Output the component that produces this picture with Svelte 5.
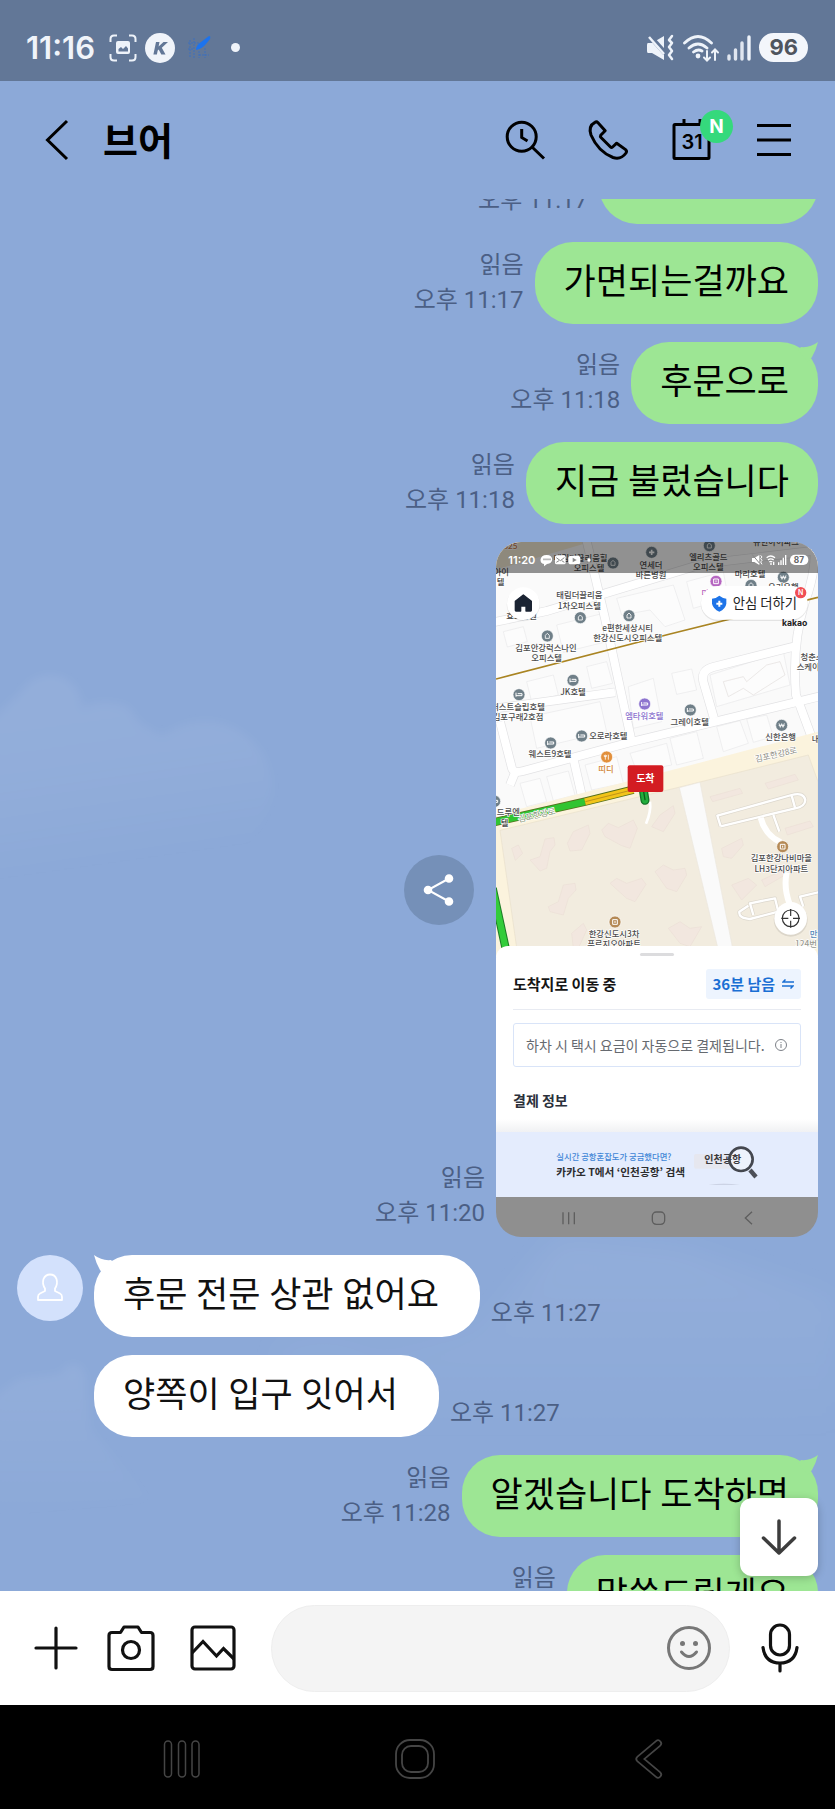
<script>
  const before = [
    { text: '가면되는걸까요', time: '오후 11:17', tail: false },
    { text: '후문으로', time: '오후 11:18', tail: true },
    { text: '지금 불렀습니다', time: '오후 11:18', tail: false }
  ];
  const received = [
    { text: '후문 전문 상관 없어요', time: '오후 11:27', first: true },
    { text: '양쪽이 입구 잇어서', time: '오후 11:27', first: false }
  ];
  const after = [
    { text: '알겠습니다 도착하면', time: '오후 11:28', tail: true },
    { text: '말씀드릴게요', time: '오후 11:28', tail: false }
  ];

  const gray = '#6f7f88';
  const ink = '#4b4b4b';
  const pins = [
    [369, 84, gray, 'b'], [485, 52, gray, 'p'], [658, 32, gray, 'b'], [880, 127, gray, 'w'],
    [783, 151, gray, 'b'], [678, 139, '#b565c0', 's'], [271, 248, gray, 'b'], [417, 242, gray, 'b'],
    [172, 303, gray, 'b'], [249, 436, gray, 'h'], [87, 479, gray, 'h'], [464, 507, '#8d74cf', 'h'],
    [601, 525, gray, 'h'], [275, 603, gray, 'h'], [875, 571, gray, 'w'], [182, 624, gray, 'h'],
    [350, 666, '#e2903c', 'f'], [14, 799, gray, 'h'], [878, 935, '#b58a56', 's'], [375, 1161, '#b58a56', 's']
  ];
  const labels = [
    [62, 42, 's25', '#c77b4a'], [34, 119, '아이', ink], [32, 150, '텔', ink],
    [272, 79, '태림더끌리움힐', ink], [297, 107, '오피스텔', ink],
    [483, 98, '연세더', ink], [483, 129, '바른병원', ink],
    [655, 75, '엘리츠골드', ink], [655, 106, '오피스텔', ink], [858, 29, '유한아이파크', ink],
    [780, 126, '마리호텔', ink], [880, 164, '우리은행', ink], [646, 182, '마', '#b565c0'],
    [268, 190, '태림더끌리움', ink], [268, 221, '1차오피스텔', ink], [95, 252, '효요양원', ink],
    [413, 287, 'e편한세상시티', ink], [413, 318, '한강신도시오피스텔', ink],
    [168, 348, '김포안강럭스나인', ink], [170, 379, '오피스텔', ink],
    [249, 481, 'JK호텔', ink], [84, 524, '퍼스트슬립호텔', ink], [84, 555, '김포구래2호점', ink],
    [463, 552, '엠타워호텔', '#8d74cf'], [599, 570, '그레이호텔', ink], [355, 612, '오로라호텔', ink],
    [872, 616, '신한은행', ink], [180, 667, '웨스트9호텔', ink], [348, 711, '띠디', '#d08436'],
    [966, 374, '청춘스', ink], [966, 405, '스케이트', ink], [988, 621, '내과', ink],
    [55, 841, '드루엔', ink], [44, 872, '텔', ink],
    [874, 979, '김포한강나비마을', ink], [874, 1010, 'LH3단지아파트', ink],
    [372, 1205, '한강신도시3차', ink], [372, 1237, '푸르지오아파트', ink],
    [982, 1207, '만남', '#4f86b8'], [948, 1235, '124번', '#9a9a90']
  ];
  const roads = [
    'M10 262 L170 228 L640 86 L1000 44',
    'M288 10 L345 250 L425 620',
    'M18 520 L375 472',
    'M30 560 L66 700 Q72 716 100 708 L420 622 L990 484',
    'M970 10 Q985 90 945 200 Q905 330 918 480 L985 660',
    'M915 334 L670 396 Q632 406 640 440 L672 550',
    'M250 670 L275 780', 'M78 706 L60 750'
  ];
  const blocks = [
    'M40 290 L100 275 L112 320 L52 336Z', 'M200 270 L340 235 L350 320 L220 352Z',
    'M380 190 L550 150 L585 255 L525 275 L480 225 L395 240Z', 'M110 440 L190 420 L205 480 L125 500Z',
    'M290 395 L350 380 L368 445 L305 460Z', 'M415 455 L490 430 L515 560 L430 580Z',
    'M545 415 L605 402 L620 465 L560 478Z', 'M660 420 L880 350 L900 450 L680 515Z',
    'M120 545 L330 500 L350 590 L140 640Z', 'M540 610 L620 590 L640 670 L560 690Z',
    'M680 575 L750 557 L775 625 L700 650Z', 'M770 552 L830 540 L850 605 L790 622Z',
    'M90 745 L150 730 L170 800 L110 815Z', 'M170 725 L235 708 L255 780 L190 797Z',
    'M285 690 L380 665 L400 745 L305 765Z', 'M590 140 L700 110 L715 190 L610 220Z',
    'M420 655 L530 625 L545 690 L440 710Z'
  ];
  const flats = [
    'M65 940 L85 930 L98 955 L76 976Z',
    'M120 975 L150 965 L165 912 L192 908 L195 930 L180 950 L170 1000 L150 1008Z',
    'M232 925 L250 890 L295 870 L300 895 L275 945 L240 948Z',
    'M335 885 L355 865 L385 878 L430 855 L442 880 L420 940 L395 932 L345 905Z',
    'M485 875 L510 840 L550 812 L555 835 L520 890Z',
    'M175 1115 L205 1100 L220 1050 L255 1045 L258 1065 L235 1090 L220 1140 L180 1130Z',
    'M360 1045 L380 1030 L410 1045 L455 1030 L468 1048 L435 1100 L410 1090Z',
    'M495 1010 L520 990 L550 1005 L585 1000 L590 1020 L560 1070 L530 1060Z',
    'M660 785 L750 760 L758 775 L668 800Z', 'M825 745 L915 718 L925 735 L835 762Z',
    'M885 880 L960 858 L970 875 L892 900Z', 'M695 940 L755 910 L760 930 L725 970 L700 965Z',
    'M725 1050 L775 1030 L800 1050 L755 1095Z', 'M815 1035 L880 1005 L885 1020 L825 1055Z',
    'M535 1180 L570 1160 L600 1180 L635 1175 L600 1235 L570 1225Z', 'M245 1195 L280 1165 L290 1185 L265 1240 L250 1240Z'
  ];
  let draft = $state('');
</script>

{#snippet sent(m)}
  <li class="row out">
    <p class="meta">읽음<br />{m.time}</p>
    <p class="bubble green">
      {m.text}
      {#if m.tail}
        <svg class="tail right" viewBox="0 0 20 20" aria-hidden="true">
          <path d="M3 5 Q12 6 20 0 Q18 8 14 15 L10 20 L0 8Z" fill="#9de694" />
        </svg>
      {/if}
    </p>
  </li>
{/snippet}

<div class="phone">
  <div class="status">
    <div class="side">
      <span class="clock">11:16</span>
      <svg class="cap" width="28" height="28" viewBox="0 0 28 28" fill="none" stroke="#eef3fa" stroke-width="2">
        <path d="M1.500 8V5Q1.500 1.500 5 1.500H8M20 1.500H23Q26.500 1.500 26.500 5V8M26.500 20V23Q26.500 26.500 23 26.500H20M8 26.500H5Q1.500 26.500 1.500 23V20" />
        <rect x="7" y="7" width="14" height="13" rx="2" fill="#eef3fa" stroke="none" />
        <path d="M9.500 17.500V15L12 13L14 15L17 12L19 14.500V17.500Z" fill="#627797" stroke="none" />
      </svg>
      <svg width="30" height="30" viewBox="0 0 30 30">
        <circle cx="15" cy="15" r="15" fill="#f0f4fa" />
        <path d="M11 9H14.500L13.600 13.500L18.500 9H23L16.800 14.800L20.500 21.500H16.300L13.700 16.500L12.700 17.400L11.900 21.500H8.400Z" fill="#627797" />
      </svg>
      <svg class="note" width="24" height="24" viewBox="0 0 24 24">
        <path d="M1 7H12M7 2V23M1 13H6M12 19H22M18 12V22M3 4V22M12 15V22" stroke="#3c70bd" stroke-width="1" stroke-dasharray="2 1" fill="none" />
        <path d="M9 14Q9 9 14 6L22 0Q24 0 23 3L19 8Q15 13 9 14Z" fill="#1c73ee" />
      </svg>
      <span class="dot"></span>
    </div>
    <div class="side">
      <svg width="28" height="28" viewBox="0 0 28 28">
        <path d="M1 9H5L17 2V26L5 19H1Q0 19 0 17V11Q0 9 1 9Z" fill="#eef3fa" />
        <path d="M1 0L18 19" stroke="#627797" stroke-width="5" />
        <path d="M2 3L17 20" stroke="#eef3fa" stroke-width="2.500" />
        <path d="M25 2L22 6L25 9L22 13L25 17L22 21L25 25" stroke="#eef3fa" stroke-width="2.500" fill="none" stroke-linecap="round" stroke-linejoin="round" />
      </svg>
      <svg width="36" height="28" viewBox="0 0 36 28" fill="none" stroke="#eef3fa" stroke-width="2.800" stroke-linecap="round">
        <path d="M1.500 9Q15 -4 28.500 9M6 14Q15 6 24 14M10.500 18Q15 14.500 19 17" />
        <circle cx="15" cy="22" r="2.400" fill="#eef3fa" stroke="none" />
        <path d="M24 17V26M21 23.500L24 26.500L27 23.500M32 26V16M29 18.500L32 15.500L35 18.500" stroke-width="2" />
      </svg>
      <svg width="24" height="28" viewBox="0 0 24 28" stroke="#eef3fa" stroke-width="3.400" stroke-linecap="round">
        <path d="M2 22V25M8.500 16V25M15 9V25" opacity=".9" /><path d="M22 3V25" />
      </svg>
      <span class="battery">96</span>
    </div>
  </div>

  <header>
    <button class="back" aria-label="뒤로">
      <svg width="24" height="48" viewBox="0 0 24 48"><path d="M22 5L2.500 24L22 43" fill="none" stroke="#000" stroke-width="3" /></svg>
    </button>
    <h1>브어</h1>
    <nav>
      <button aria-label="검색">
        <svg viewBox="0 0 48 48" fill="none" stroke="#000" stroke-width="3">
          <circle cx="20.700" cy="20.700" r="14.500" /><path d="M31 31L43 42.500M20.700 13V21.500L26.500 25" />
        </svg>
      </button>
      <button aria-label="통화">
        <svg viewBox="0 0 48 48" fill="none" stroke="#000" stroke-width="3" stroke-linejoin="round">
          <path d="M11 6.300Q12.600 5.300 14 6.800L21.200 14.800L16.700 19.200Q16 20.500 17 21.500L26.500 31Q27.500 32 28.600 31L32.700 27.200L41.600 33.600Q43.200 35 42 37Q37 44 29 41.500Q14 35.500 7 19Q4 10 11 6.300Z" />
        </svg>
      </button>
      <button aria-label="일정">
        <svg viewBox="0 0 48 48" fill="none" stroke="#000" stroke-width="3">
          <rect x="7" y="8.500" width="35" height="34" rx="1" /><path d="M17 3V10M33 3V10" />
        </svg>
        <span class="day">31</span>
        <span class="badge">N</span>
      </button>
      <button aria-label="메뉴">
        <svg viewBox="0 0 48 48" stroke="#000" stroke-width="3"><path d="M7 9.500H41M7 24H41M7 38.500H41" /></svg>
      </button>
    </nav>
  </header>

  <main>
    <svg class="sky" viewBox="0 0 835 1392" preserveAspectRatio="none" aria-hidden="true">
      <defs>
        <linearGradient id="fade" gradientUnits="userSpaceOnUse" x1="0" y1="470" x2="30" y2="680">
          <stop offset="0" stop-color="#fff" stop-opacity=".07" /><stop offset=".5" stop-color="#fff" stop-opacity=".05" /><stop offset="1" stop-color="#fff" stop-opacity="0" />
        </linearGradient>
        <linearGradient id="low" x1="0" y1="0" x2="0" y2="1">
          <stop offset="0" stop-color="#fff" stop-opacity=".06" /><stop offset="1" stop-color="#fff" stop-opacity="0" />
        </linearGradient>
        <filter id="soft"><feGaussianBlur stdDeviation="5" /></filter>
        <filter id="haze"><feGaussianBlur stdDeviation="14" /></filter>
      </defs>
      <path d="M-10 522 L20 495 Q35 472 60 478 Q80 485 82 510 Q100 498 128 508 L140 525 L162 537 Q200 512 235 530 Q268 548 272 585 Q275 620 220 680 H-10Z" fill="url(#fade)" filter="url(#soft)" />
      <path d="M-10 1200 L20 1180 L60 1175 Q75 1155 85 1175 L90 1230 L150 1300 L-10 1320Z" fill="url(#low)" filter="url(#soft)" />
      <path d="M270 1150 Q320 1125 380 1150 L480 1130 L560 1040 L680 1050 L835 1100 V1240 H300Z" fill="url(#low)" filter="url(#haze)" />
    </svg>

    <ol>
      <li class="row out">
        <p class="meta">오후 11:17</p>
        <p class="bubble green cut"></p>
      </li>
      {#each before as m}
        {@render sent(m)}
      {/each}

      <li class="row out">
        <p class="meta">읽음<br />오후 11:20</p>
        <div class="photo">
          <button class="share" aria-label="공유">
            <svg width="36" height="36" viewBox="0 0 36 36" fill="#fff" stroke="#fff" stroke-width="2">
              <path d="M28 6.500L7 18L28 29.500" fill="none" /><circle cx="7" cy="18" r="3.300" /><circle cx="28" cy="6.500" r="3.300" /><circle cx="28" cy="29.500" r="3.300" />
            </svg>
          </button>
          <div class="shot">
            <svg class="map" viewBox="18 21 966 1245" font-family="'Noto Sans CJK KR', sans-serif">
              <rect x="18" y="21" width="966" height="1245" fill="#fafafa" />
              <path d="M18 21H300L18 104Z" fill="#f4ecd6" />
              <g fill="#fcfcfc" stroke="#e9e9ea" stroke-width="2">
                {#each blocks as d}<path {d} />{/each}
              </g>
              <path d="M700 440 L760 425 L770 440 L830 390 L870 380 L885 420 L790 480 L760 460 L715 485Z" fill="none" stroke="#e3dedd" stroke-width="2" />
              <g fill="none" stroke="#e2e2e4" stroke-width="28">{#each roads as d}<path {d} />{/each}</g>
              <g fill="none" stroke="#fff" stroke-width="24">{#each roads as d}<path {d} />{/each}</g>
              <path d="M18 432L540 297L984 187" stroke="#a98422" stroke-width="5" fill="none" />
              <path d="M18 840L520 712L984 590V1266H18Z" fill="#fbf3dd" />
              <path d="M30 886L570 756L955 660L984 740V1215L800 1266H84Z" fill="#f2ecdf" stroke="#e8dfcb" stroke-width="2" />
              <path d="M568 758L630 742L733 1266H690Z" fill="#fafafa" stroke="#ebe7de" stroke-width="2" />
              <g fill="#f2e7df" stroke="#ecdfd6" stroke-width="2">
                {#each flats as d}<path {d} />{/each}
              </g>
              <g fill="none" stroke-linejoin="round">
                <g stroke="#dcd7cd" stroke-width="11">
                  <path d="M692 874L682 842L905 780Q940 770 946 795Q945 815 915 820L692 874M905 782L915 818M850 840L868 890" />
                  <path d="M790 1140L780 1105L855 1090L865 1130L780 1152Q745 1150 748 1130L775 1112M985 1072L930 1085L940 1115" />
                </g>
                <g stroke="#fff" stroke-width="7">
                  <path d="M692 874L682 842L905 780Q940 770 946 795Q945 815 915 820L692 874M905 782L915 818M850 840L868 890" />
                  <path d="M790 1140L780 1105L855 1090L865 1130L780 1152Q745 1150 748 1130L775 1112M985 1072L930 1085L940 1115" />
                </g>
                <path d="M812 848Q825 900 872 922M890 1012Q880 1060 900 1110" stroke="#fff" stroke-width="18" />
                <path d="M480 800Q484 830 468 866" stroke="#fff" stroke-width="8" />
              </g>
              <path d="M10 862L285 800L430 764" stroke="#55701c" stroke-width="25" fill="none" />
              <path d="M10 862L285 800" stroke="#31c431" stroke-width="20" />
              <path d="M285 800L430 764" stroke="#f2c419" stroke-width="20" />
              <path d="M286 800L430 764" stroke="#a5781a" stroke-width="2" />
              <path d="M8 1060L46 1236" stroke="#1d7a25" stroke-width="25" /><path d="M8 1060L46 1236" stroke="#33cc3a" stroke-width="19" />
              <path d="M460 765L465 796" stroke="#14742a" stroke-width="27" stroke-linecap="round" /><path d="M460 765L465 796" stroke="#20ad3c" stroke-width="19" stroke-linecap="round" /><path d="M460 765L465 794" stroke="#125a1c" stroke-width="4" stroke-linecap="round" />
              <g font-size="25" text-anchor="middle" stroke="#fff" stroke-width="4" paint-order="stroke">
                <text transform="translate(142 849) rotate(-13)" fill="#7f8f70">김포한강로</text>
                <text transform="translate(860 667) rotate(-13)" fill="#8c8a80">김포한강8로</text>
              </g>
              {#each pins as [x, y, c, k]}
                <circle cx={x} cy={y} r="18" fill={c} stroke="#fff" stroke-width="2" />
                {#if k === 'b'}<path d="M{x - 6} {y + 7}V{y - 2}L{x} {y - 8}L{x + 6} {y - 2}V{y + 7}Z" fill="none" stroke="#fff" stroke-width="2.500" />
                {:else if k === 'h'}<path d="M{x - 9} {y - 6}V{y + 6}M{x - 9} {y + 3}H{x + 9}V{y - 3}H{x - 4}" fill="none" stroke="#fff" stroke-width="3" />
                {:else if k === 'w'}<path d="M{x - 8} {y - 6}L{x - 4} {y + 6}L{x} {y - 5}L{x + 4} {y + 6}L{x + 8} {y - 6}M{x - 9} {y}H{x + 9}" fill="none" stroke="#fff" stroke-width="2.500" />
                {:else if k === 'p'}<path d="M{x - 8} {y}H{x + 8}M{x} {y - 8}V{y + 8}" stroke="#fff" stroke-width="5" />
                {:else if k === 'f'}<path d="M{x - 4} {y - 7}V{y + 8}M{x - 7} {y - 6}V{y - 1}H{x - 1}V{y - 6}M{x + 5} {y - 7}V{y + 8}" fill="none" stroke="#fff" stroke-width="2.500" />
                {:else}<path d="M{x - 7} {y - 7}H{x + 7}V{y + 7}H{x - 7}ZM{x} {y - 3}V{y + 3}" fill="none" stroke="#fff" stroke-width="3" />{/if}
              {/each}
              <g font-size="25" font-weight="500" text-anchor="middle" stroke="#fff" stroke-width="4" paint-order="stroke" stroke-linejoin="round">
                {#each labels as [x, y, t, c]}<text {x} {y} fill={c}>{t}</text>{/each}
              </g>
              <rect x="413" y="691" width="107" height="80" rx="6" fill="#d31c22" />
              <text x="466" y="742" font-size="30" font-weight="700" fill="#fff" text-anchor="middle">도착</text>

              <rect x="18" y="21" width="966" height="93" fill="#000" fill-opacity=".42" />
              <g fill="#fff">
                <text x="55" y="87" font-family="Inter, sans-serif" font-weight="600" font-size="33">11:20</text>
                <path d="M170 60C147 60 147 86 162 87L162 94L171 87C192 86 192 60 170 60Z" />
                <rect x="195" y="61" width="32" height="27" rx="5" /><rect x="235" y="62" width="36" height="26" rx="8" />
                <circle cx="297" cy="75" r="5" />
                <path d="M786 69H793L808 60V90L793 81H786Z" /><path d="M866 90V82M873 90V76M880 90V68M887 90V60" stroke="#fff" stroke-width="4" />
                <path d="M830 68Q842 58 855 68M834 75Q842 68 851 75M838 81Q842 78 847 81M851 80V90M843 84V90" stroke="#fff" stroke-width="4" fill="none" />
                <path d="M812 61L816 66L812 71L816 76L812 81L816 88" stroke="#fff" stroke-width="3" fill="none" />
                <rect x="900" y="59" width="55" height="31" rx="15" />
              </g>
              <path d="M786 58L808 84" stroke="#888" stroke-width="3" />
              <path d="M160 73H182" stroke="#999" stroke-width="5" stroke-dasharray="4 2" />
              <path d="M199 68L211 77L223 68M199 82L207 77M223 82L215 77" stroke="#888" stroke-width="3" fill="none" />
              <path d="M248 68V82L260 75Z" fill="#888" />
              <text x="927" y="84" font-family="Inter, sans-serif" font-weight="700" font-size="25" fill="#666" text-anchor="middle">87</text>

              <circle cx="100" cy="209" r="50" fill="#000" opacity=".08" />
              <circle cx="100" cy="206" r="49" fill="#fff" />
              <path d="M76 226V199L100 180L124 199V226Q124 228 122 228H108V213H92V228H78Q76 228 76 226Z" fill="#1b2433" stroke="#1b2433" stroke-width="4" stroke-linejoin="round" />
              <rect x="632" y="156" width="322" height="102" rx="51" fill="#000" opacity=".09" />
              <rect x="633" y="153" width="320" height="101" rx="50" fill="#fff" />
              <path d="M688 182Q700 191 709 191V206Q707 221 688 230Q669 221 666 206V191Q677 191 688 182Z" fill="#1e74e8" />
              <path d="M679 206H697M688 197V215" stroke="#fff" stroke-width="6" />
              <text x="728" y="219" font-size="40" fill="#222">안심 더하기</text>
              <circle cx="932" cy="173" r="17" fill="#f04e53" />
              <text x="932" y="180" font-family="Inter, sans-serif" font-size="21" font-weight="600" fill="#fff" text-anchor="middle">N</text>
              <text x="914" y="274" font-family="Inter, sans-serif" font-size="26" font-weight="700" fill="#222" text-anchor="middle">kakao</text>
              <circle cx="902" cy="1154" r="51" fill="#000" opacity=".09" />
              <circle cx="902" cy="1150" r="49" fill="#fff" />
              <g stroke="#333" stroke-width="3.500" fill="none"><circle cx="902" cy="1150" r="25" /><path d="M902 1122V1143M902 1157V1178M874 1150H895M909 1150H930" /></g>
            </svg>
            <section class="sheet">
              <span class="grip"></span>
              <div class="trip">
                <strong>도착지로 이동 중</strong>
                <span class="chip">36분 남음
                  <svg width="12" height="10" viewBox="0 0 12 10" fill="none" stroke="#1a6fd4" stroke-width="1.500"><path d="M12 3H1L3.500 .5M0 7H11L8.500 9.500" /></svg>
                </span>
              </div>
              <div class="notice">
                <span>하차 시 택시 요금이 자동으로 결제됩니다.</span>
                <svg width="14" height="14" viewBox="0 0 14 14" fill="none" stroke="#7d8188"><circle cx="7" cy="7" r="5.500" /><path d="M7 6V10M7 4V5" /></svg>
              </div>
              <strong class="pay">결제 정보</strong>
            </section>
            <svg class="ad" viewBox="18 606 966 195" font-family="'Noto Sans CJK KR', sans-serif">
              <rect x="18" y="606" width="966" height="195" fill="#e4ecfd" />
              <text x="199" y="689" font-size="25" font-weight="500" fill="#3f86d6">실시간 공항혼잡도가 궁금했다면?</text>
              <text x="199" y="738" font-size="32" font-weight="700" fill="#2c2c2e">카카오 T에서 ‘인천공항’ 검색</text>
              <rect x="612" y="672" width="110" height="44" rx="6" fill="#e6e7ef" />
              <path d="M655 764Q700 758 750 764Z" fill="#c5cbdc" />
              <circle cx="753" cy="688" r="32" fill="#f4f6fc" fill-opacity=".6" />
              <text x="643" y="700" font-size="30" font-weight="700" fill="#3a3a3e">인천공항</text>
              <circle cx="753" cy="688" r="35" fill="none" stroke="#44474f" stroke-width="8" />
              <path d="M780 720L798 741" stroke="#4d5058" stroke-width="13" />
            </svg>
            <svg class="keys" viewBox="18 803 966 120" fill="none" stroke="#5e5e5e" stroke-width="4">
              <path d="M219 849V885M236 849V885M253 849V885" /><rect x="487" y="848" width="37" height="37" rx="12" /><path d="M786 847L766 866L786 885" />
            </svg>
          </div>
        </div>
      </li>

      {#each received as m}
        <li class="row in">
          <div class="who">
            {#if m.first}
              <svg width="66" height="66" viewBox="0 0 66 66" aria-label="브어">
                <circle cx="33" cy="33" r="33" fill="#d3e1fc" />
                <path d="M28 33.500Q25 29 26.500 24Q28.500 19.500 33 19.500Q38 19.500 39.500 24Q41 29 38 33.500V36L43 38.500Q45 39.500 45 42V45H21V42Q21 39.500 23 38.500L28 36Z" fill="none" stroke="#fff" stroke-width="1.800" stroke-linejoin="round" />
              </svg>
            {/if}
          </div>
          <p class="bubble white">
            {m.text}
            {#if m.first}
              <svg class="tail left" viewBox="0 0 20 20" aria-hidden="true">
                <path d="M17 5 Q8 6 0 0 Q2 8 6 15 L10 20 L20 8Z" fill="#fff" />
              </svg>
            {/if}
          </p>
          <p class="meta">{m.time}</p>
        </li>
      {/each}

      {#each after as m}
        {@render sent(m)}
      {/each}
    </ol>

    <button class="down" aria-label="맨 아래로">
      <svg width="40" height="40" viewBox="0 0 40 40" fill="none" stroke="#3d3d3d" stroke-width="3.500" stroke-linecap="round" stroke-linejoin="round"><path d="M20 4V36M4.500 21L20 36L35.500 21" /></svg>
    </button>
  </main>

  <form class="compose" onsubmit={(e) => e.preventDefault()}>
    <button type="button" class="plus" aria-label="추가">
      <svg width="44" height="44" viewBox="0 0 44 44" stroke="#111" stroke-width="3.200" stroke-linecap="round"><path d="M2 22H42M22 2V42" /></svg>
    </button>
    <button type="button" class="camera" aria-label="카메라">
      <svg width="48" height="48" viewBox="0 0 48 48" fill="none" stroke="#111" stroke-width="3.200" stroke-linejoin="round">
        <path d="M5 8.500H13.500L17 3H31L34.500 8.500H43Q46 8.500 46 11.500V42.500Q46 45.500 43 45.500H5Q2 45.500 2 42.500V11.500Q2 8.500 5 8.500Z" /><circle cx="24" cy="26" r="8.500" />
      </svg>
    </button>
    <button type="button" class="album" aria-label="사진">
      <svg width="46" height="46" viewBox="0 0 46 46" fill="none" stroke="#111" stroke-width="3.200"><rect x="2" y="2" width="42" height="42" rx="3" /><path d="M2 28L13 16.500L26.500 31L33.500 23.500L44 34" /></svg>
    </button>
    <div class="field">
      <input type="text" aria-label="메시지" bind:value={draft} />
      <button type="button" aria-label="이모티콘">
        <svg width="46" height="46" viewBox="0 0 46 46" fill="none" stroke="#777" stroke-width="3"><circle cx="23" cy="23" r="20.500" /><path d="M15.500 27Q23 36 30.500 27" stroke-linecap="round" /><circle cx="16.500" cy="18.500" r="2.500" fill="#777" stroke="none" /><circle cx="29.500" cy="18.500" r="2.500" fill="#777" stroke="none" /></svg>
      </button>
    </div>
    <button type="button" class="mic" aria-label="음성">
      <svg width="42" height="52" viewBox="0 0 42 52" fill="none" stroke="#111" stroke-width="3.200" stroke-linecap="round"><rect x="11.500" y="3" width="19" height="30" rx="9.500" /><path d="M4 25.500Q6 41 21 41Q36 41 38 25.500M21 41V49" /></svg>
    </button>
  </form>

  <div class="system">
    <button aria-label="최근 앱"><svg width="44" height="44" viewBox="0 0 44 44" fill="none" stroke="#454545" stroke-width="1.500"><rect x="4.500" y="4" width="7" height="36" rx="3.500" /><rect x="18.500" y="4" width="7" height="36" rx="3.500" /><rect x="32" y="4" width="7" height="36" rx="3.500" /></svg></button>
    <button aria-label="홈"><svg width="44" height="44" viewBox="0 0 44 44" fill="none" stroke="#454545" stroke-width="1.800"><rect x="3" y="3" width="38" height="38" rx="14" /><rect x="9" y="9" width="26" height="26" rx="9" /></svg></button>
    <button aria-label="이전"><svg width="44" height="44" viewBox="0 0 44 44" fill="none"><path d="M31 6.500L12.500 22L31 37.500" stroke="#454545" stroke-width="8" stroke-linecap="round" stroke-linejoin="round" /><path d="M31 6.500L12.500 22L31 37.500" stroke="#000" stroke-width="4.500" stroke-linecap="round" stroke-linejoin="round" /></svg></button>
  </div>
</div>

<style>
  :global(body) { margin: 0; }
  * { box-sizing: border-box; }
  .phone { display: flex; flex-direction: column; height: 100vh; background: #8ca9d8; font-family: Roboto, 'Noto Sans CJK KR', sans-serif; color: #000; }
  button { display: grid; place-items: center; padding: 0; border: 0; background: none; }
  svg { display: block; }
  p, h1, ol { margin: 0; padding: 0; }

  .status { display: flex; justify-content: space-between; align-items: center; height: 81px; padding: 14px 27px 0 26px; background: #627797; color: #f0f4fa; }
  .side { display: flex; align-items: center; gap: 8px; }
  .clock { font: 600 31px/32px Inter, sans-serif; }
  .cap { margin-left: 6px; }
  .note { margin-left: 4px; }
  .dot { width: 9px; height: 9px; margin-left: 12px; border-radius: 50%; background: #f0f4fa; }
  .battery { padding: 0 10px; border-radius: 15px; background: #f3f6fb; color: #4f555e; font: 700 22px/29px Inter, sans-serif; }

  header { display: flex; align-items: center; height: 118px; padding: 0 37px 0 45px; }
  h1 { flex: 1; padding: 0 0 2px 34px; font: 700 38px/48px 'Noto Sans CJK KR', sans-serif; }
  nav { display: flex; gap: 35px; }
  nav button { position: relative; width: 48px; height: 48px; }
  nav svg { width: 48px; height: 48px; }
  .day { position: absolute; left: 13px; top: 14px; width: 24px; text-align: center; font: 600 20px/24px Inter, sans-serif; }
  .badge { position: absolute; left: 33px; top: -6px; width: 33px; height: 33px; border-radius: 50%; background: #35d97c; color: #fff; font: 700 19px/34px Inter, sans-serif; text-align: center; }

  main { position: relative; flex: 1; min-height: 0; overflow: hidden; }
  .sky { position: absolute; inset: 0; width: 100%; height: 100%; }
  ol { position: relative; display: flex; flex-direction: column; gap: 18px; margin-top: -57px; list-style: none; }
  .row { display: flex; align-items: flex-end; gap: 11px; padding: 0 17px; }
  .out { justify-content: flex-end; }
  .meta { padding-bottom: 6px; color: #4b5f85; font-size: 24px; line-height: 35px; text-align: right; white-space: nowrap; }
  .bubble { position: relative; height: 82px; padding: 0 29px; border-radius: 38px; font-size: 35px; line-height: 82px; white-space: nowrap; }
  .green { background: #9de694; }
  .white { padding-right: 41px; background: #fff; color: #111; }
  .cut { width: 219px; }
  .tail { position: absolute; top: 0; width: 20px; height: 20px; }
  .tail.right { right: 0; }
  .tail.left { left: 0; }
  .who { align-self: flex-start; width: 66px; }

  .photo { position: relative; width: 322px; }
  .share { position: absolute; right: 344px; top: 50%; width: 70px; height: 70px; margin-top: -35px; border-radius: 50%; background: #7590b8; }
  .shot { overflow: hidden; border-radius: 25px; background: #8f8f8f; }
  .map, .ad, .keys { width: 100%; }
  .sheet { position: relative; margin-top: -11px; padding: 23px 17px 22px; border-radius: 12px 12px 0 0; background: linear-gradient(#fff 93%, #f0f1f3); font-family: 'Noto Sans CJK KR', sans-serif; }
  .grip { position: absolute; left: 50%; top: 7px; width: 34px; height: 3px; margin-left: -17px; border-radius: 2px; background: #dcdcde; }
  .trip { display: flex; justify-content: space-between; align-items: center; padding-bottom: 10px; border-bottom: 1px solid #e8ebf2; color: #151515; font-size: 15px; line-height: 30px; }
  .chip { display: flex; align-items: center; gap: 7px; padding: 0 7px 0 6px; border-radius: 3px; background: #edf4fe; color: #1a6fd4; font-weight: 700; white-space: nowrap; }
  .notice { display: flex; justify-content: space-between; align-items: center; height: 44px; margin-top: 13px; padding: 0 12px; border: 1px solid #d9e4f8; border-radius: 3px; color: #666a70; font-size: 14px; white-space: nowrap; }
  .pay { display: block; margin-top: 23px; color: #2b303b; font-size: 14px; line-height: 20px; }

  .down { position: absolute; right: 17px; bottom: 15px; width: 78px; height: 78px; border-radius: 12px; background: #fff; box-shadow: 0 2px 8px rgba(0, 0, 0, .22); }

  .compose { display: flex; align-items: center; gap: 29px; height: 114px; padding: 0 34px; background: #fff; }
  .album { width: 58px; }
  .field { display: flex; flex: 1; align-items: center; min-width: 0; height: 87px; padding: 0 17px 0 32px; border: 1px solid #eee; border-radius: 44px; background: #f4f4f4; }
  input { flex: 1; min-width: 0; border: 0; outline: 0; background: none; font: 400 32px/40px 'Noto Sans CJK KR', sans-serif; }

  .system { display: grid; grid-template-columns: repeat(3, 1fr); height: 104px; padding: 4px 69px 0 65px; background: #000; }
</style>
